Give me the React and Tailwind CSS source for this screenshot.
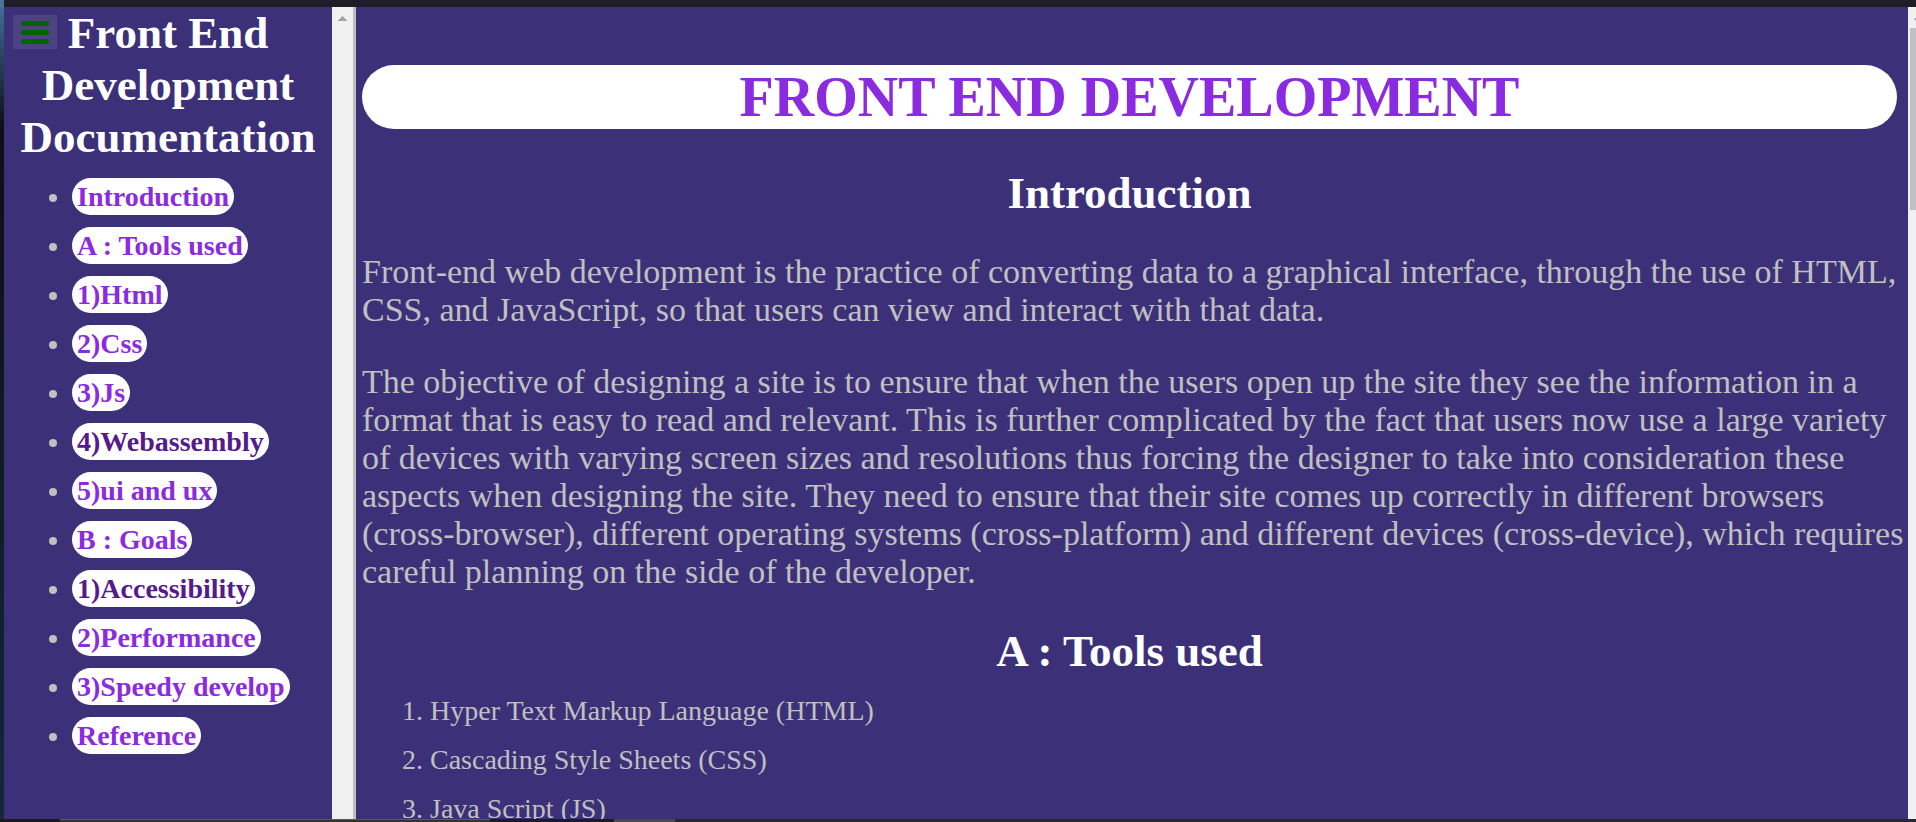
const links = [
  { label: "Introduction", href: "#introduction" },
  { label: "A : Tools used", href: "#tools" },
  { label: "1)Html", href: "#html" },
  { label: "2)Css", href: "#css" },
  { label: "3)Js", href: "#js" },
  { label: "4)Webassembly", href: "#webassembly", visited: true },
  { label: "5)ui and ux", href: "#ui-ux" },
  { label: "B : Goals", href: "#goals" },
  { label: "1)Accessibility", href: "#accessibility", visited: true },
  { label: "2)Performance", href: "#performance" },
  { label: "3)Speedy develop", href: "#speedy" },
  { label: "Reference", href: "#reference" },
];

function Arrow() {
  return (
    <svg viewBox="0 0 9 5" className="h-[5px] w-[9px] shrink-0 fill-[#a3a3a3]" aria-hidden="true">
      <path d="M4 0h1v1h1v1h1v1h1v1h1v1H0V4h1V3h1V2h1V1h1z" />
    </svg>
  );
}

function Sidebar() {
  return (
    <nav className="relative w-[328px] shrink-0 overflow-hidden">
      <button
        type="button"
        aria-label="Toggle menu"
        className="absolute top-2 left-[9px] flex h-[34px] w-11 flex-col items-center justify-center gap-1 bg-[#4d4382]"
      >
        <span className="h-[5px] w-7 rounded-sm bg-[#006400]" />
        <span className="h-[5px] w-7 rounded-sm bg-[#006400]" />
        <span className="h-[5px] w-7 rounded-sm bg-[#006400]" />
      </button>
      <h1 className="text-center text-[45px] leading-[52px] font-bold text-white">
        Front End
        <br />
        Development
        <br />
        Documentation
      </h1>
      <ul className="mt-[9px] list-disc pl-[68px] text-[28px] leading-[49px]">
        {links.map((l) => (
          <li key={l.href}>
            <a
              href={l.href}
              className={`rounded-[20px] bg-white px-[5px] py-[3px] font-bold ${l.visited ? "text-[#551a8b]" : "text-[#8a2be2]"}`}
            >
              {l.label}
            </a>
          </li>
        ))}
      </ul>
    </nav>
  );
}

function Content() {
  return (
    <main className="min-w-0 flex-1 overflow-hidden border-l-[3px] border-[#c0c0c0] pt-[58px] pr-[11px] pl-[6px]">
      <h1 className="rounded-[32px] bg-white text-center text-[56px] leading-[64px] font-bold text-[#8a2be2]">
        FRONT END DEVELOPMENT
      </h1>
      <section id="introduction">
        <h2 className="mt-[38px] text-center text-[45px] leading-[52px] font-bold text-white">Introduction</h2>
        <p className="-mr-[11px] mt-[34px] text-[34px] leading-[38px]">
          Front-end web development is the practice of converting data to a graphical interface, through the use of
          HTML, CSS, and JavaScript, so that users can view and interact with that data.
        </p>
        <p className="-mr-[11px] mt-[34px] text-[34px] leading-[38px]">
          The objective of designing a site is to ensure that when the users open up the site they see the information
          in a format that is easy to read and relevant. This is further complicated by the fact that users now use a
          large variety of devices with varying screen sizes and resolutions thus forcing the designer to take into
          consideration these aspects when designing the site. They need to ensure that their site comes up correctly
          in different browsers (cross-browser), different operating systems (cross-platform) and different devices
          (cross-device), which requires careful planning on the side of the developer.
        </p>
      </section>
      <section id="tools">
        <h2 className="mt-[34px] text-center text-[45px] leading-[52px] font-bold text-white">A : Tools used</h2>
        <ol className="mt-[9px] list-decimal pl-[68px] text-[28px] leading-[49px]">
          <li>Hyper Text Markup Language (HTML)</li>
          <li>Cascading Style Sheets (CSS)</li>
          <li>Java Script (JS)</li>
        </ol>
      </section>
    </main>
  );
}

export default function App() {
  return (
    <div className="flex h-screen flex-col overflow-hidden bg-[#3c3179] font-['Liberation_Serif',serif] text-[#c0c0c0]">
      <div className="flex h-[7px] shrink-0 bg-[#1e1e28]">
        <div className="w-1 bg-[#4a7396]" />
      </div>
      <div className="flex min-h-0 flex-1">
        <div className="w-1 shrink-0 bg-gradient-to-b from-[#3f6f99] via-[#0b1014] via-15% to-[#14283a]" />
        <Sidebar />
        <div className="flex w-[21px] shrink-0 justify-center bg-[#f0f0f0] pt-[9px]">
          <Arrow />
        </div>
        <Content />
        <div className="flex w-2 shrink-0 flex-col overflow-hidden bg-[#f0f0f0] pl-0.5">
          <div className="flex h-[21px] shrink-0 items-center pl-1">
            <Arrow />
          </div>
          <div className="h-[182px] bg-[#c1c1c1]" />
        </div>
      </div>
      <div className="flex h-[3px] shrink-0 bg-[#282636]">
        <div className="w-[60px] bg-[#1a1826]" />
        <div className="w-[430px] border-t border-[#5a5a5a] bg-[#333333]" />
        <div className="w-[124px] bg-[#1c1b2a]" />
        <div className="w-[61px] bg-[#4a4857]" />
      </div>
    </div>
  );
}
